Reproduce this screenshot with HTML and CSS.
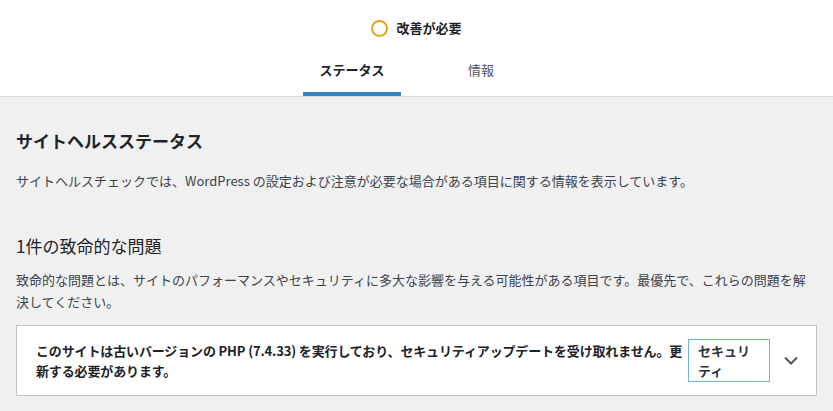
FILE: index.html
```html
<!DOCTYPE html>
<html lang="ja">
<head>
<meta charset="utf-8">
<title>サイトヘルス</title>
<link rel="stylesheet" href="styles.css">
</head>
<body>
<header class="hc-header">
  <div class="hc-title">
    <span class="hc-ring"></span>
    <span class="hc-label">改善が必要</span>
  </div>
  <nav class="hc-tabs">
    <a class="hc-tab active" href="#">ステータス</a>
    <a class="hc-tab" href="#">情報</a>
  </nav>
</header>
<main class="hc-body">
  <h2 class="hc-h2">サイトヘルスステータス</h2>
  <p class="hc-intro">サイトヘルスチェックでは、WordPress の設定および注意が必要な場合がある項目に関する情報を表示しています。</p>
  <h3 class="hc-h3">1件の致命的な問題</h3>
  <p class="hc-desc">致命的な問題とは、サイトのパフォーマンスやセキュリティに多大な影響を与える可能性がある項目です。最優先で、これらの問題を解決してください。</p>
  <div class="hc-issue">
    <span class="hc-issue-title">このサイトは古いバージョンの PHP (7.4.33) を実行しており、セキュリティアップデートを受け取れません。更新する必要があります。</span>
    <span class="hc-badge">セキュリティ</span>
    <svg class="hc-chevron" width="14" height="9" viewBox="0 0 14 9"><polyline points="1,1.5 7,7.5 13,1.5" fill="none" stroke="#50575e" stroke-width="2"/></svg>
  </div>
</main>
</body>
</html>
```
FILE: styles.css
```css
* { box-sizing: border-box; }
html, body { margin: 0; padding: 0; }
body {
  background: #f0f0f1;
  font-family: "Noto Sans CJK JP", "Noto Sans", sans-serif;
  font-size: 13px;
  color: #1d2327;
  width: 833px;
  height: 411px;
  overflow: hidden;
}
.hc-header {
  background: #fff;
  border-bottom: 1px solid #dcdcde;
  display: flex;
  flex-direction: column;
  align-items: center;
}
.hc-title {
  display: flex;
  align-items: center;
  gap: 8px;
  padding: 18px 0 14px;
  height: 52px;
}
.hc-ring {
  width: 17px;
  height: 17px;
  border-radius: 50%;
  border: 2px solid #dba617;
}
.hc-label {
  font-weight: 700;
  line-height: 20px;
  color: #1d2327;
}
.hc-tabs {
  display: grid;
  grid-template-columns: 1fr 1fr;
}
.hc-tab {
  display: block;
  text-align: center;
  text-decoration: none;
  color: #50575e;
  padding: 8px 16px 16px;
  margin: 0 16px;
  line-height: 20px;
}
.hc-tab.active {
  color: #1d2327;
  font-weight: 700;
  box-shadow: inset 0 -4px #3582c4;
}
.hc-body {
  padding: 0 16px;
}
.hc-h2 {
  margin: 32px 0 0;
  font-size: 17px;
  line-height: 24px;
  font-weight: 700;
  color: #1d2327;
}
.hc-intro {
  margin: 18px 0 0;
  line-height: 20px;
  color: #3c434a;
}
.hc-h3 {
  margin: 43px 0 0;
  font-size: 17px;
  line-height: 24px;
  font-weight: 400;
  color: #1d2327;
}
.hc-desc {
  margin: 11px 0 0;
  line-height: 22px;
  color: #3c434a;
}
.hc-issue {
  margin-top: 12px;
  background: #fff;
  border: 1px solid #c3c4c7;
  height: 71px;
  display: flex;
  align-items: center;
  padding: 0 18px 0 19px;
}
.hc-issue-title {
  flex: 1 1 auto;
  font-weight: 700;
  line-height: 20px;
  letter-spacing: -0.14px;
  color: #1d2327;
}
.hc-badge {
  flex: none;
  width: 82px;
  margin-left: 1px;
  margin-right: 14px;
  border: 1px solid #72aee6;
  padding: 1px 9px 0;
  line-height: 20px;
  font-weight: 700;
  color: #2c3338;
}
.hc-chevron {
  flex: none;
  display: block;
}
```
